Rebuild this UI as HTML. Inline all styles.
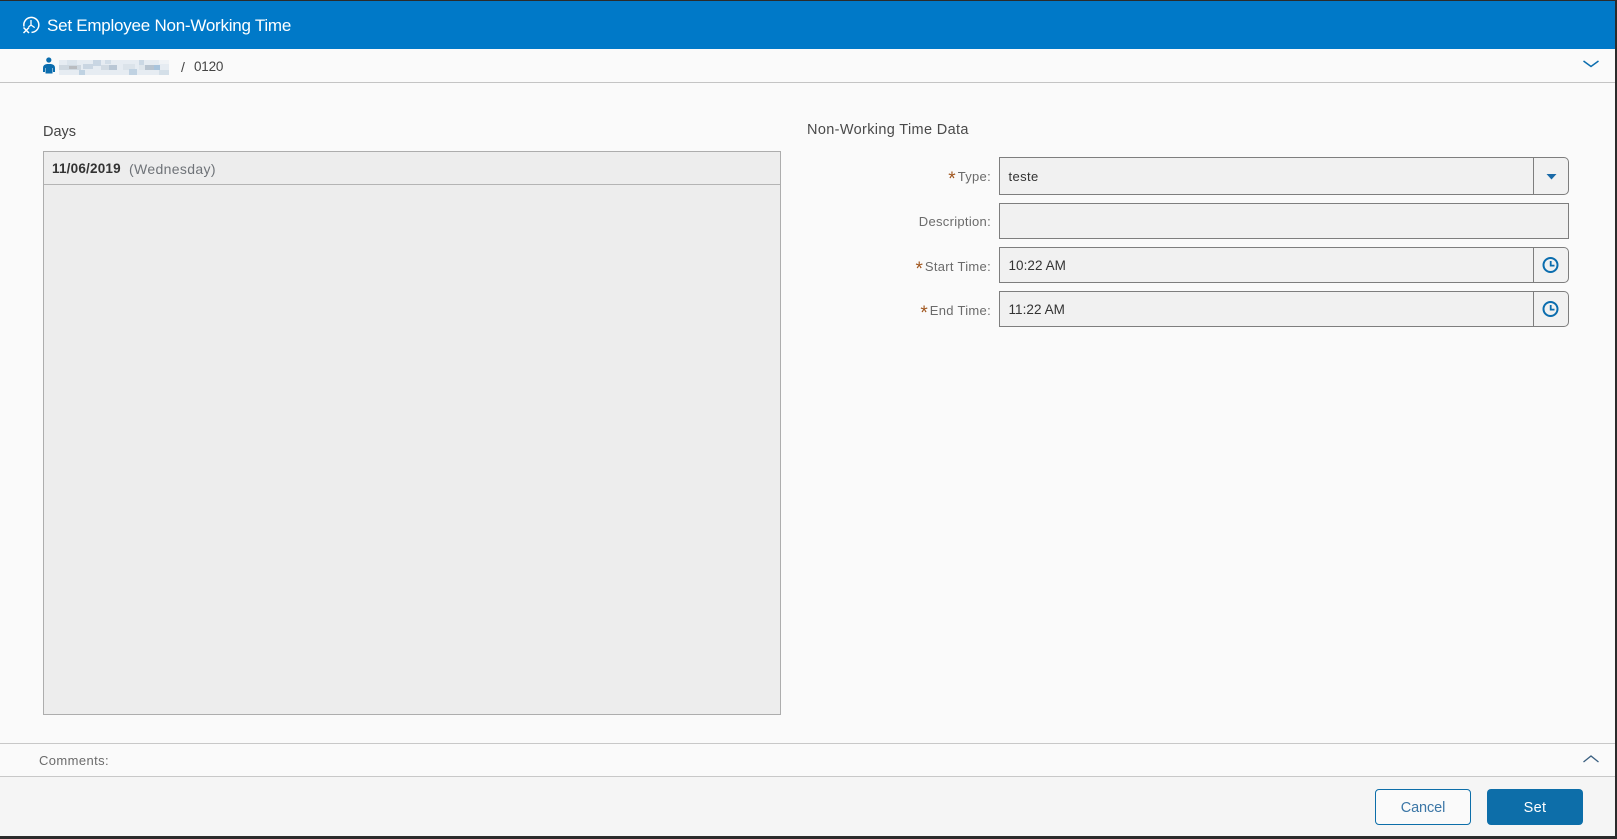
<!DOCTYPE html>
<html><head><meta charset="utf-8"><title>Set Employee Non-Working Time</title>
<style>
html,body{margin:0;padding:0;width:1617px;height:839px;overflow:hidden;background:#2b2b2b}
*{box-sizing:border-box}
body{font-family:"Liberation Sans",Arial,sans-serif;position:relative}
.a{position:absolute}
.t{position:absolute;white-space:nowrap;line-height:18px;font-family:"Liberation Sans",Arial,sans-serif}
.lbl{color:#6b6b6b;font-size:13px;letter-spacing:.3px;text-align:right;right:626px}
.star{color:#a0561e;font-size:19px;line-height:0;vertical-align:-4px;margin-right:2px;letter-spacing:0}
.f{position:absolute;left:999px;width:570px;background:#f1f1f1;border:1px solid #7e7e7e}
.r{border-radius:0 5px 5px 0}
.sep{position:absolute;left:1533px;width:1px;background:#7e7e7e}
.val{color:#333;font-size:13.5px;left:1008.5px;letter-spacing:.05px}
</style></head><body>
<div class="a" style="left:0;top:1px;width:1615px;height:835px;background:#fafafa"></div>
<div class="a" style="left:0;top:1px;width:1615px;height:48px;background:#0079c8"></div>
<svg class="a" style="left:21px;top:15px" width="20" height="20" viewBox="0 0 20 20" fill="none" stroke="#fff" stroke-width="1.5"><path d="M3 11.5A7.5 7.5 0 1 1 10.5 17.4"/><path d="M10 5V10M10 10L13.7 12.6M10 10L7.5 12" stroke-width="1.3"/><path d="M2.5 12.5L8 18M8 12.5L2.5 18" stroke-width="1.5"/></svg>
<div class="t" style="left:47px;top:16px;color:#fff;font-size:17px;letter-spacing:-.24px;line-height:20px">Set Employee Non-Working Time</div>

<svg class="a" style="left:42px;top:57px" width="16" height="18" viewBox="0 0 16 18"><circle cx="6.8" cy="3" r="2.6" fill="#0b6dae"/><path d="M1 15V11Q1 7.5 5 7H9Q13 7.5 13 11V15H11V11H10.5V16.5H3.5V11H3V15Z" fill="#0b6dae"/></svg>
<svg class="a" style="left:59px;top:60px" width="110" height="15" viewBox="0 0 110 15" shape-rendering="crispEdges">
<rect width="110" height="15" fill="#e6ecf2"/>
<rect x="0" y="5" width="22" height="5" fill="#cfd8e0"/><rect x="8" y="0" width="10" height="5" fill="#dbe4ec"/>
<rect x="10" y="6" width="8" height="3" fill="#b9bcc0"/><rect x="20" y="10" width="6" height="5" fill="#bfd2e2"/>
<rect x="24" y="4" width="10" height="5" fill="#cad6e2"/><rect x="34" y="0" width="8" height="6" fill="#c9d6e3"/>
<rect x="42" y="5" width="14" height="5" fill="#d2dbe3"/><rect x="46" y="0" width="6" height="4" fill="#d3dee8"/>
<rect x="50" y="5" width="8" height="5" fill="#b9c7d5"/><rect x="64" y="4" width="12" height="6" fill="#dbe3ea"/>
<rect x="70" y="9" width="8" height="6" fill="#c0d2e2"/><rect x="80" y="5" width="10" height="5" fill="#dfe6ec"/>
<rect x="80" y="0" width="5" height="5" fill="#cbd8e4"/><rect x="86" y="5" width="14" height="5" fill="#b8c4d0"/>
<rect x="95" y="5" width="6" height="5" fill="#a9c4dc"/><rect x="100" y="0" width="10" height="4" fill="#f0f3f6"/>
<rect x="100" y="10" width="10" height="5" fill="#d4dfe8"/>
</svg>
<div class="t" style="left:181px;top:58px;color:#444;font-size:14px">/</div>
<div class="t" style="left:194px;top:58px;color:#444;font-size:13.5px;letter-spacing:-.2px">0120</div>
<svg class="a" style="left:1582px;top:59px" width="18" height="10" viewBox="0 0 18 10" fill="none" stroke="#0b6dae" stroke-width="1.5"><path d="M1.5 2L9 7.5L16.5 2"/></svg>
<div class="a" style="left:0;top:82px;width:1615px;height:1px;background:#c4c4c4"></div>

<div class="t" style="left:43px;top:123px;color:#444;font-size:14.5px;letter-spacing:0">Days</div>
<div class="a" style="left:43px;top:151px;width:738px;height:564px;background:#ededed;border:1px solid #adadad"></div>
<div class="a" style="left:44px;top:184px;width:736px;height:1px;background:#b4b4b4"></div>
<div class="t" style="left:52px;top:160px;color:#333;font-size:13.5px;font-weight:bold;letter-spacing:.2px">11/06/2019</div>
<div class="t" style="left:129px;top:160px;color:#6f7378;font-size:14px;letter-spacing:.35px">(Wednesday)</div>

<div class="t" style="left:807px;top:121px;color:#4a4a4a;font-size:14.5px;letter-spacing:.35px">Non-Working Time Data</div>

<div class="t lbl" style="top:168px"><span class="star">*</span>Type:</div>
<div class="t lbl" style="top:213px">Description:</div>
<div class="t lbl" style="top:258px"><span class="star">*</span>Start Time:</div>
<div class="t lbl" style="top:302px"><span class="star">*</span>End Time:</div>

<div class="f r" style="top:157px;height:38px"></div><div class="sep" style="top:157px;height:38px"></div>
<div class="f" style="top:203px;height:36px"></div>
<div class="f r" style="top:247px;height:36px"></div><div class="sep" style="top:247px;height:36px"></div>
<div class="f r" style="top:291px;height:36px"></div><div class="sep" style="top:291px;height:36px"></div>

<div class="t val" style="top:168px;font-size:13px;letter-spacing:.4px">teste</div>
<div class="t val" style="top:257px">10:22 AM</div>
<div class="t val" style="top:301px">11:22 AM</div>

<svg class="a" style="left:1546px;top:173px" width="11" height="7" viewBox="0 0 11 7"><path d="M0.5 1H10.5L5.5 6.5Z" fill="#1a6aa8"/></svg>
<svg class="a" style="left:1540px;top:257px" width="20" height="16" viewBox="0 0 20 16" fill="none" stroke="#0b6dae"><circle cx="10.5" cy="8" r="7" stroke-width="2"/><path d="M10.7 4V8.6H14.5" stroke-width="1.8"/></svg>
<svg class="a" style="left:1540px;top:301px" width="20" height="16" viewBox="0 0 20 16" fill="none" stroke="#0b6dae"><circle cx="10.5" cy="8" r="7" stroke-width="2"/><path d="M10.7 4V8.6H14.5" stroke-width="1.8"/></svg>

<div class="a" style="left:0;top:743px;width:1615px;height:1px;background:#c8c8c8"></div>
<div class="t" style="left:39px;top:752px;color:#6b6b6b;font-size:13px;letter-spacing:.4px">Comments:</div>
<svg class="a" style="left:1582px;top:754px" width="18" height="10" viewBox="0 0 18 10" fill="none" stroke="#3a5f80" stroke-width="1.3"><path d="M1.5 8L9 2L16.5 8"/></svg>
<div class="a" style="left:0;top:776px;width:1615px;height:60px;background:#f5f5f5;border-top:1px solid #c8c8c8"></div>
<div class="a" style="left:1375px;top:789px;width:96px;height:36px;background:#fafafa;border:1px solid #0d6ea9;border-radius:4px;color:#3b76a6;font-size:14.5px;text-align:center;line-height:36px;letter-spacing:-.1px">Cancel</div>
<div class="a" style="left:1487px;top:789px;width:96px;height:36px;background:#0d6ea9;border-radius:4px;color:#fff;font-size:14.5px;text-align:center;line-height:38px;letter-spacing:.3px">Set</div>
</body></html>
